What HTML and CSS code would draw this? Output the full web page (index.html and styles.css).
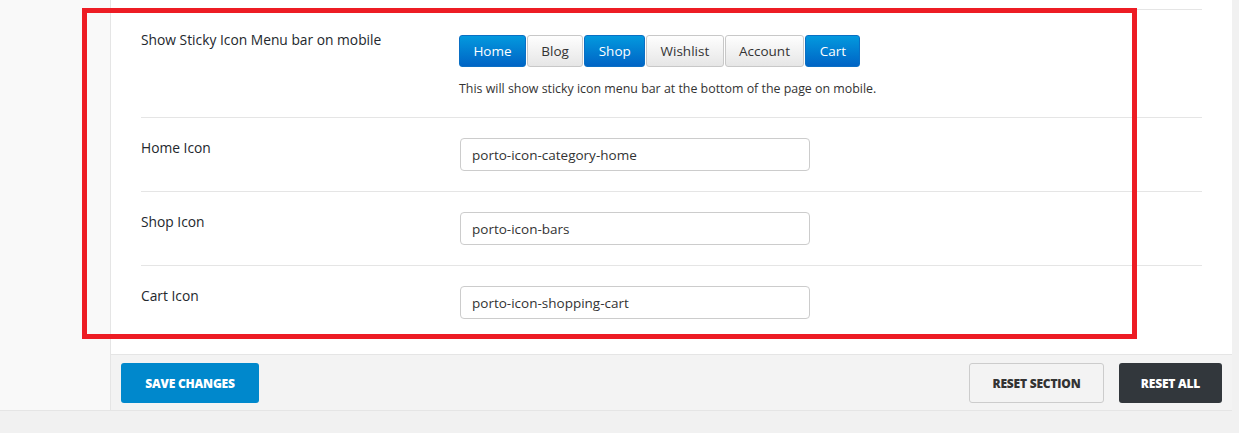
FILE: index.html
```html
<!DOCTYPE html>
<html lang="en">
<head>
<meta charset="UTF-8">
<meta name="viewport" content="width=device-width, initial-scale=1.0">
<title>Theme Options - Mobile Sticky Bar</title>
<link rel="stylesheet" href="styles.css">
</head>
<body>
<div class="options">
    <div class="sidebar"></div>

    <div class="main">
        <div class="panel">
            <div class="row row-prev"></div>

            <div class="row">
                <div class="label">Show Sticky Icon Menu bar on mobile</div>
                <div class="field">
                    <div class="buttonset">
                        <button class="seg on">Home</button>
                        <button class="seg">Blog</button>
                        <button class="seg on">Shop</button>
                        <button class="seg">Wishlist</button>
                        <button class="seg">Account</button>
                        <button class="seg on">Cart</button>
                    </div>
                    <p class="desc">This will show sticky icon menu bar at the bottom of the page on mobile.</p>
                </div>
            </div>

            <div class="row">
                <div class="label">Home Icon</div>
                <div class="field"><input type="text" class="text" value="porto-icon-category-home"></div>
            </div>

            <div class="row">
                <div class="label">Shop Icon</div>
                <div class="field"><input type="text" class="text" value="porto-icon-bars"></div>
            </div>

            <div class="row last">
                <div class="label">Cart Icon</div>
                <div class="field"><input type="text" class="text" value="porto-icon-shopping-cart"></div>
            </div>
        </div>

        <div class="footer">
            <button class="btn btn-save">Save Changes</button>
            <div class="footer-right">
                <button class="btn btn-reset">Reset Section</button>
                <button class="btn btn-reset-all">Reset All</button>
            </div>
        </div>
    </div>

    <div class="highlight"></div>
</div>
</body>
</html>
```
FILE: styles.css
```css
body {
    margin: 0;
    background: #f1f1f1;
    font-family: 'Open Sans', 'Noto Sans', sans-serif;
    color: #23282d;
}

.options {
    position: relative;
    display: flex;
    width: 1232px;
    border-bottom: 1px solid #e5e5e5;
}

.sidebar {
    width: 110px;
    background: #f9f9f9;
    border-right: 1px solid #e5e5e5;
}

.main {
    flex: 1;
    display: flex;
    flex-direction: column;
}

.panel {
    background: #fff;
    padding: 0 30px 15px;
}

.row {
    display: grid;
    grid-template-columns: 318px 1fr;
    padding: 20px 0;
    border-bottom: 1px solid #e5e5e5;
}

.row.last {
    border-bottom: none;
}

.row-prev {
    padding: 0;
    height: 9px;
}

.label {
    font-size: 13.8px;
    font-weight: 500;
    line-height: 19px;
    color: #23282d;
}

.buttonset {
    display: flex;
    margin-top: 5px;
}

.seg {
    height: 32px;
    padding: 0 13.4px;
    font-family: inherit;
    font-size: 13.5px;
    color: #333;
    background: linear-gradient(#fefefe, #e6e6e6);
    border: 1px solid #c8c8c8;
    border-radius: 3px;
    margin-right: 1px;
    cursor: pointer;
}

.seg.on {
    color: #fff;
    background: linear-gradient(#0399de, #0064c5);
    border-color: #0a6fc4;
}

.desc {
    margin: 13px 0 0;
    font-size: 12.4px;
    line-height: 17px;
    color: #333;
}

.text {
    display: block;
    width: 350px;
    height: 33px;
    box-sizing: border-box;
    margin: 0 0 0 1px;
    padding: 0 11px;
    font-family: inherit;
    font-size: 13.5px;
    color: #333;
    border: 1px solid #ccc;
    border-radius: 4px;
    outline: none;
}

.footer {
    display: flex;
    justify-content: space-between;
    background: #f3f3f3;
    border-top: 1px solid #e5e5e5;
    padding: 8px 10px 7px;
}

.footer-right {
    display: flex;
    gap: 15px;
}

.btn {
    height: 40px;
    border-radius: 3px;
    font-family: inherit;
    font-size: 12px;
    font-weight: 800;
    letter-spacing: -0.2px;
    text-transform: uppercase;
    cursor: pointer;
}

.btn-save {
    width: 138px;
    background: #0088cc;
    color: #fff;
    border: none;
}

.btn-reset {
    width: 135px;
    background: #f3f3f3;
    color: #333;
    border: 1px solid #ccc;
}

.btn-reset-all {
    width: 103px;
    background: #32373c;
    color: #fff;
    border: none;
}

/* red frame drawn over the sticky bar settings */
.highlight {
    position: absolute;
    left: 82px;
    top: 8px;
    width: 1055px;
    height: 331px;
    box-sizing: border-box;
    border: 5px solid #ed1c24;
    pointer-events: none;
}
```
